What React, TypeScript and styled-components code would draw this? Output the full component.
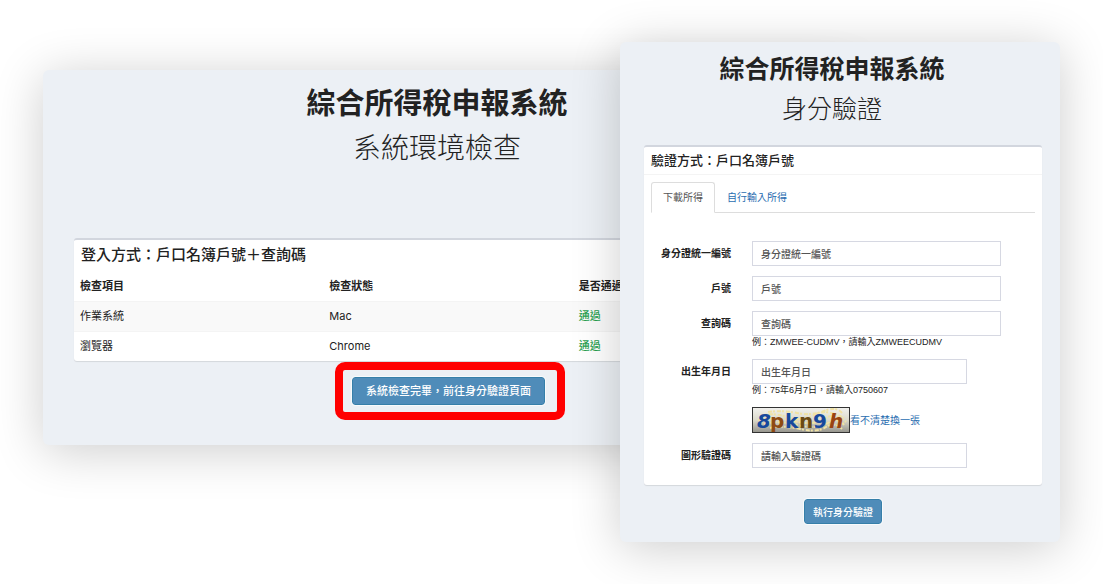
import React from "react";
import styled, { createGlobalStyle } from "styled-components";

const GlobalStyle = createGlobalStyle`
  *, *::before, *::after { box-sizing: border-box; }
  body {
    margin: 0;
    background: #fff;
    color: #222;
    font-family: Inter, "Noto Sans CJK TC", sans-serif;
    font-size: 11px;
    line-height: 16px;
  }
  h1, h2, p { margin: 0; }
`;

const Page = styled.main`
  display: grid;
  grid-template-columns: minmax(0, 1fr) 233px 207px;
  align-items: start;
  padding: 42px 43px;
  overflow: hidden;
`;

const Panel = styled.section`
  grid-row: 1;
  background: #ecf0f5;
  border-radius: 6px;
  box-shadow: 0 6px 50px rgba(0, 0, 0, 0.2);
`;

const CheckPanel = styled(Panel)`
  grid-column: 1 / 3;
  margin-top: 28px;
  padding: 12px 31px 25px;
`;

const LoginPanel = styled(Panel)`
  grid-column: 2 / 4;
  z-index: 1;
  padding: 7px 18px 18px 24px;
`;

const Heading = styled.header<{ $line: number; $gap: number }>`
  margin-bottom: ${(p) => p.$gap}px;
  padding-right: 22px;
  text-align: center;
  line-height: ${(p) => p.$line}px;
`;

const Title = styled.h1<{ $size: number }>`
  font-size: ${(p) => p.$size}px;
  font-weight: 700;
`;

const Subtitle = styled.p<{ $size: number }>`
  font-size: ${(p) => p.$size}px;
  font-weight: 200;
`;

const Box = styled.div`
  background: #fff;
  border-top: 2px solid #d2d6de;
  border-radius: 3px;
  box-shadow: 0 1px 1px rgba(0, 0, 0, 0.1);
`;

const LoginBox = styled(Box)`
  padding-bottom: 17px;
`;

const BoxTitle = styled.h2`
  padding: 5px 7px 6px;
  font-size: 15px;
  line-height: 20px;
  font-weight: 500;
`;

const LoginBoxTitle = styled(BoxTitle)`
  padding: 3px 7px 4px;
  border-bottom: 1px solid #f4f4f4;
  font-size: 13px;
`;

const CheckTable = styled.table`
  width: 100%;
  border-collapse: collapse;
  table-layout: fixed;

  th, td {
    height: 30px;
    padding: 0 6px;
    text-align: left;
  }
  tbody tr { border-top: 1px solid #f4f4f4; }
  tbody tr:first-child { background: #f9f9f9; }
`;

const Passed = styled.td`
  color: #28a050;
  font-weight: 500;
`;

const CheckActions = styled.div`
  display: flex;
  justify-content: center;
  padding: 1px 0 0 4px;
`;

const SubmitRow = styled.div`
  display: flex;
  justify-content: center;
  margin-top: 14px;
`;

const Highlight = styled.div`
  border: 8px solid #f00;
  border-radius: 10px;
  padding: 7px 12px 7px 9px;
`;

const Button = styled.button<{ $large?: boolean }>`
  display: block;
  height: ${(p) => (p.$large ? 28 : 25)}px;
  padding: 0 ${(p) => (p.$large ? 13 : 8)}px;
  border: 1px solid #367fa9;
  border-radius: 3px;
  outline: 1px solid #f8fafc;
  background: #4f8cb9;
  color: #fff;
  font: inherit;
  font-size: ${(p) => (p.$large ? 11 : 10)}px;
  font-weight: 500;
  white-space: nowrap;
`;

const Tabs = styled.nav`
  display: flex;
  margin: 7px 7px 0;
  border-bottom: 1px solid #ddd;
`;

const Tab = styled.a<{ $active?: boolean }>`
  height: 31px;
  margin-bottom: -1px;
  padding: 5px 11px;
  border: 1px solid ${(p) => (p.$active ? "#ddd" : "transparent")};
  border-bottom-color: ${(p) => (p.$active ? "#fff" : "transparent")};
  border-radius: 3px 3px 0 0;
  color: ${(p) => (p.$active ? "#555" : "#2a6db0")};
  font-size: 10px;
  line-height: 18px;
  text-decoration: none;
`;

const Form = styled.form`
  display: grid;
  grid-template-columns: 87px minmax(0, 1fr);
  column-gap: 21px;
  row-gap: 10px;
  align-items: start;
  padding: 28px 41px 0 0;
  font-size: 10px;
`;

const Label = styled.label`
  font-weight: 700;
  line-height: 25px;
  text-align: right;
`;

const Field = styled.div<{ $narrow?: boolean }>`
  grid-column: 2;
  padding-right: ${(p) => (p.$narrow ? 34 : 0)}px;
`;

const Input = styled.input`
  display: block;
  width: 100%;
  height: 25px;
  padding: 0 8px;
  border: 1px solid #d6d8e2;
  border-radius: 0;
  background: #fff;
  color: #444;
  font: inherit;
  font-weight: 500;

  &::placeholder { color: #555; opacity: 1; }
`;

const Hint = styled.p`
  font-family: "Liberation Sans", "Noto Sans CJK TC", sans-serif;
  font-size: 9px;
  line-height: 13px;
`;

const CaptchaRow = styled(Field)`
  display: flex;
  align-items: center;
`;

const RefreshLink = styled.a`
  color: #2a6db0;
  line-height: 20px;
  text-decoration: none;
`;

const captchaGlyphs = [
  { char: "8", x: 5, fill: "#17489c", slant: "italic" },
  { char: "p", x: 18, fill: "#8f4a12", slant: "normal" },
  { char: "k", x: 33, fill: "#17489c", slant: "normal" },
  { char: "n", x: 47, fill: "#6b4a12", slant: "normal" },
  { char: "9", x: 61, fill: "#17489c", slant: "normal" },
  { char: "h", x: 77, fill: "#9a4310", slant: "italic" },
];

const Captcha = () => (
  <svg width="98" height="26" viewBox="0 0 98 26" role="img" aria-label="圖形驗證碼">
    <defs>
      <linearGradient id="captchaShade" x1="0" y1="0" x2="0" y2="1">
        <stop offset="0" stopColor="#f1f1ee" />
        <stop offset="0.5" stopColor="#dcdacb" />
        <stop offset="1" stopColor="#94938c" />
      </linearGradient>
    </defs>
    <rect x="0.5" y="0.5" width="97" height="25" fill="url(#captchaShade)" stroke="#333" />
    <g fill="none" stroke="#f0e2a4" strokeWidth="2" strokeDasharray="4 1 2 2">
      <path d="M16 5 Q30 3 45 6 T72 4 T90 6" />
      <path d="M8 9 Q20 5 35 10 T62 8 T92 11" />
      <path d="M6 13 Q22 9 42 14 T72 12 T94 15" />
      <path d="M12 17 Q26 13 46 18 T76 16 T92 18" />
      <path d="M18 21 Q30 18 48 22 T74 20 T90 22" />
    </g>
    <g fontFamily="DejaVu Sans, sans-serif" fontSize="20" fontWeight="700">
      {captchaGlyphs.map((g) => (
        <text key={g.char} x={g.x} y="21" fill={g.fill} fontStyle={g.slant}>
          {g.char}
        </text>
      ))}
    </g>
  </svg>
);

const checks = [
  { item: "作業系統", status: "Mac" },
  { item: "瀏覽器", status: "Chrome" },
];

export default function App() {
  return (
    <>
      <GlobalStyle />
      <Page>
        <CheckPanel>
          <Heading $line={44} $gap={68}>
            <Title $size={29}>綜合所得稅申報系統</Title>
            <Subtitle $size={28}>系統環境檢查</Subtitle>
          </Heading>
          <Box>
            <BoxTitle>登入方式：戶口名簿戶號＋查詢碼</BoxTitle>
            <CheckTable>
              <thead>
                <tr>
                  <th>檢查項目</th>
                  <th>檢查狀態</th>
                  <th>是否通過</th>
                </tr>
              </thead>
              <tbody>
                {checks.map((c) => (
                  <tr key={c.item}>
                    <td>{c.item}</td>
                    <td>{c.status}</td>
                    <Passed>通過</Passed>
                  </tr>
                ))}
              </tbody>
            </CheckTable>
          </Box>
          <CheckActions>
            <Highlight>
              <Button type="button" $large>
                系統檢查完畢，前往身分驗證頁面
              </Button>
            </Highlight>
          </CheckActions>
        </CheckPanel>

        <LoginPanel>
          <Heading $line={40} $gap={16}>
            <Title $size={25}>綜合所得稅申報系統</Title>
            <Subtitle $size={25}>身分驗證</Subtitle>
          </Heading>
          <LoginBox>
            <LoginBoxTitle>驗證方式：戶口名簿戶號</LoginBoxTitle>
            <Tabs>
              <Tab href="#download" $active>下載所得</Tab>
              <Tab href="#manual">自行輸入所得</Tab>
            </Tabs>
            <Form>
              <Label htmlFor="idno">身分證統一編號</Label>
              <Field><Input id="idno" placeholder="身分證統一編號" /></Field>
              <Label htmlFor="household">戶號</Label>
              <Field><Input id="household" placeholder="戶號" /></Field>
              <Label htmlFor="query">查詢碼</Label>
              <Field>
                <Input id="query" placeholder="查詢碼" />
                <Hint>例：ZMWEE-CUDMV，請輸入ZMWEECUDMV</Hint>
              </Field>
              <Label htmlFor="birth">出生年月日</Label>
              <Field $narrow>
                <Input id="birth" placeholder="出生年月日" />
                <Hint>例：75年6月7日，請輸入0750607</Hint>
              </Field>
              <CaptchaRow>
                <Captcha />
                <RefreshLink href="#refresh">看不清楚換一張</RefreshLink>
              </CaptchaRow>
              <Label htmlFor="captcha">圖形驗證碼</Label>
              <Field $narrow><Input id="captcha" placeholder="請輸入驗證碼" /></Field>
            </Form>
          </LoginBox>
          <SubmitRow>
            <Button type="button">執行身分驗證</Button>
          </SubmitRow>
        </LoginPanel>
      </Page>
    </>
  );
}
